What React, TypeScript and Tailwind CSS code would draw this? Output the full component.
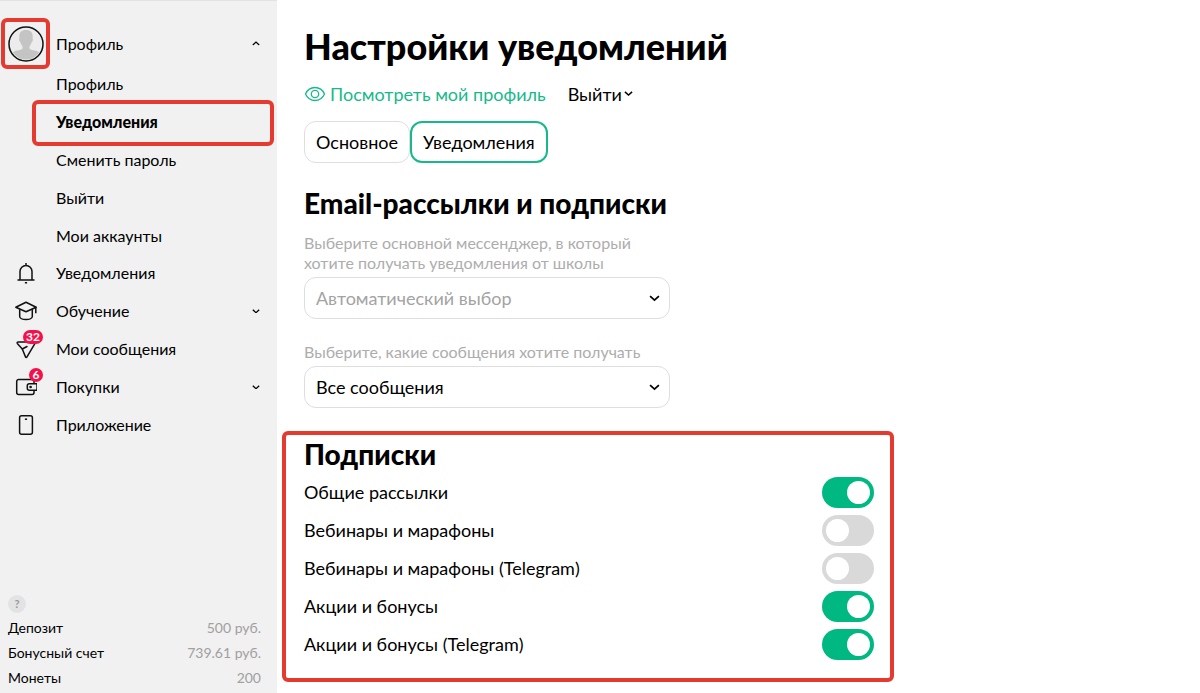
import { useState } from 'react';
import type { ReactNode } from 'react';

function ChevronDown({ className = '' }: { className?: string }) {
  return (
    <svg viewBox="0 0 10 6" fill="none" stroke="currentColor" strokeWidth="1.6" aria-hidden="true" className={className}>
      <path d="M1 1l4 3.6L9 1" />
    </svg>
  );
}

function AvatarIcon() {
  return (
    <svg viewBox="0 0 36 36" width="36" height="36" aria-hidden="true">
      <defs>
        <clipPath id="avatar">
          <circle cx="18" cy="18" r="15.5" />
        </clipPath>
      </defs>
      <circle cx="18" cy="18" r="17" fill="#ececec" stroke="#111" strokeWidth="1.5" />
      <g clipPath="url(#avatar)" fill="#c4c4c4">
        <path d="M18 4c-4.800 0-6.900 2.800-6.700 7 .1 1 .1 1.800-.2 2.600.2 1.800.8 2.600 1.400 3 .4 1.400 1.200 2.800 2 3.600v2.600c-1.200 1.700-9.500 1.700-10.500 4.700V36h28v-8.500c-1-3-9.300-3-10.500-4.700v-2.600c.8-.8 1.600-2.200 2-3.600.6-.4 1.200-1.200 1.400-3-.3-.8-.3-1.600-.2-2.600.2-4.200-1.900-7-6.700-7z" />
      </g>
    </svg>
  );
}

function BellIcon() {
  return (
    <svg viewBox="0 0 22 22" width="22" height="22" fill="none" stroke="#111" strokeWidth="1.5" aria-hidden="true">
      <path d="M2.500 18h17M5 18V9.500a6 6 0 0 1 12 0V18M11 3.500V1M9.900 20.800h2.200" />
    </svg>
  );
}

function CapIcon() {
  return (
    <svg viewBox="0 0 22 22" width="22" height="22" fill="none" stroke="#111" strokeWidth="1.5" strokeLinejoin="round" aria-hidden="true">
      <path d="M.8 7.200L11 2.300l10.200 4.900L11 11.800z" />
      <path d="M4.700 9.200v7.200c0 1.700 2.600 3.200 6.300 3.200s6.300-1.500 6.300-3.200V9.200M20.800 7.500v5.700" />
    </svg>
  );
}

function SendIcon() {
  return (
    <svg viewBox="0 0 22 22" width="22" height="22" fill="none" stroke="#111" strokeWidth="1.5" strokeLinejoin="round" strokeLinecap="round" aria-hidden="true">
      <path d="M3.200 4h15.900c.9 0 1.300.7.9 1.400L12 18.900c-.4.700-1.200.7-1.500 0L7.300 11 2.300 5.400C1.900 4.700 2.300 4 3.200 4z" />
      <path d="M7.300 11l4.700-2.500" />
    </svg>
  );
}

function WalletIcon() {
  return (
    <svg viewBox="0 0 22 22" width="22" height="22" fill="none" stroke="#111" strokeWidth="1.5" aria-hidden="true">
      <path d="M19 7.500V5.500a2 2 0 0 0-2-2H3.700a2 2 0 0 0-2 2v11a2 2 0 0 0 2 2H17a2 2 0 0 0 2-2V14.500" />
      <path d="M22 7.700h-7.700a2 2 0 0 0-2 2v2.600a2 2 0 0 0 2 2H22z" />
      <circle cx="15.600" cy="11" r=".6" fill="#111" />
    </svg>
  );
}

function PhoneIcon() {
  return (
    <svg viewBox="0 0 22 22" width="22" height="22" fill="none" stroke="#111" strokeWidth="1.5" aria-hidden="true">
      <rect x="4.600" y="1.700" width="12.800" height="18.600" rx="2" />
      <path d="M9.900 5.200h2.200" />
    </svg>
  );
}

function EyeIcon() {
  return (
    <svg viewBox="0 0 22 16" width="22" height="16" fill="none" stroke="currentColor" strokeWidth="1.300" aria-hidden="true">
      <path d="M1.500 8C3.300 4 7 1.500 11 1.500S18.700 4 20.500 8c-1.800 4-5.500 6.500-9.500 6.500S3.300 12 1.500 8z" />
      <circle cx="11" cy="8" r="3.700" />
    </svg>
  );
}

const profileItems = ['Профиль', 'Уведомления', 'Сменить пароль', 'Выйти', 'Мои аккаунты'];

const menuItems: { label: string; icon: ReactNode; badge?: string; expandable?: boolean }[] = [
  { label: 'Уведомления', icon: <BellIcon /> },
  { label: 'Обучение', icon: <CapIcon />, expandable: true },
  { label: 'Мои сообщения', icon: <SendIcon />, badge: '32' },
  { label: 'Покупки', icon: <WalletIcon />, badge: '6', expandable: true },
  { label: 'Приложение', icon: <PhoneIcon /> },
];

const balances = [
  { label: 'Депозит', value: '500 руб.' },
  { label: 'Бонусный счет', value: '739.61 руб.' },
  { label: 'Монеты', value: '200' },
];

function Sidebar() {
  return (
    <aside className="flex w-[277px] shrink-0 flex-col border-t border-[#e2e2e2] bg-[#f1f1f1]">
      <nav className="pt-[17px] text-base leading-5">
        <button type="button" className="relative flex h-[51px] w-full items-center pr-4 pl-2 text-left">
          <AvatarIcon />
          <span className="absolute top-0 left-px h-[51px] w-[49px] rounded-md border-4 border-[#e53a30]" />
          <span className="flex-1 pl-3">Профиль</span>
          <ChevronDown className="mr-px w-2 rotate-180" />
        </button>

        <ul className="-mt-1">
          {profileItems.map((item) => (
            <li key={item} className="relative">
              <a
                href="#"
                className={`flex h-[38px] items-center pl-14 ${item === 'Уведомления' ? 'font-black' : ''}`}
              >
                {item}
              </a>
              {item === 'Уведомления' && (
                <span className="pointer-events-none absolute -top-[3px] right-[3px] left-8 h-[46px] rounded-md border-4 border-[#e53a30]" />
              )}
            </li>
          ))}
        </ul>

        <ul className="-mt-px">
          {menuItems.map((item) => (
            <li key={item.label}>
              <a href="#" className="flex h-[38px] items-center pr-4 pl-[15px]">
                <span className="relative">
                  {item.icon}
                  {item.badge && (
                    <span className="absolute -top-2 -right-[6px] flex h-[14px] min-w-[14px] items-center justify-center rounded-full bg-[#f5104a] px-[3px] text-xs leading-none font-bold text-white">
                      {item.badge}
                    </span>
                  )}
                </span>
                <span className="flex-1 pl-[19px]">{item.label}</span>
                {item.expandable && <ChevronDown className="mr-px w-2" />}
              </a>
            </li>
          ))}
        </ul>
      </nav>

      <div className="mt-auto pr-4 pb-[3px] pl-2 text-sm">
        <button
          type="button"
          aria-label="Помощь"
          className="mb-[2px] flex size-[18px] items-center justify-center rounded-full bg-[#e3e3e3] text-[11px] font-bold text-[#999]"
        >
          ?
        </button>
        <dl>
          {balances.map((item) => (
            <div key={item.label} className="flex h-[25px] items-center justify-between">
              <dt>{item.label}</dt>
              <dd className="text-[#a0a0a0]">{item.value}</dd>
            </div>
          ))}
        </dl>
      </div>
    </aside>
  );
}

interface SelectFieldProps {
  id: string;
  label: string;
  value: string;
  muted?: boolean;
}

function SelectField({ id, label, value, muted }: SelectFieldProps) {
  return (
    <div className="max-w-[366px]">
      <label htmlFor={id} className="block pb-1 text-base leading-5 text-[#adadad]">
        {label}
      </label>
      <div className="relative">
        <select
          id={id}
          className={`h-[42px] w-full appearance-none rounded-xl border border-[#dedede] bg-white px-[11px] text-lg ${muted ? 'text-[#a3a3a3]' : 'text-black'}`}
        >
          <option>{value}</option>
        </select>
        <ChevronDown className="pointer-events-none absolute top-[18px] right-[10px] w-[11px]" />
      </div>
    </div>
  );
}

const initialSubscriptions = [
  { id: 'common', label: 'Общие рассылки', enabled: true },
  { id: 'webinars', label: 'Вебинары и марафоны', enabled: false },
  { id: 'webinars-tg', label: 'Вебинары и марафоны (Telegram)', enabled: false },
  { id: 'promo', label: 'Акции и бонусы', enabled: true },
  { id: 'promo-tg', label: 'Акции и бонусы (Telegram)', enabled: true },
];

function Subscriptions() {
  const [items, setItems] = useState(initialSubscriptions);

  const toggle = (id: string) => {
    setItems(items.map((item) => (item.id === id ? { ...item, enabled: !item.enabled } : item)));
  };

  return (
    <section className="mt-[23px] -ml-[22px] max-w-[612px] rounded-md border-4 border-[#e53a30] pr-4 pb-[15px] pl-[18px]">
      <h2 className="text-[28px] leading-[38px] font-black">Подписки</h2>
      {items.map((item) => (
        <label key={item.id} className="flex h-[38px] cursor-pointer items-center justify-between text-lg">
          {item.label}
          <input
            type="checkbox"
            checked={item.enabled}
            onChange={() => toggle(item.id)}
            className="h-[31px] w-[52px] cursor-pointer appearance-none rounded-full bg-[#d9d9d9] p-1 before:block before:size-[23px] before:rounded-full before:bg-white checked:bg-[#00b882] checked:before:ml-[21px]"
          />
        </label>
      ))}
    </section>
  );
}

export default function App() {
  return (
    <div className="flex min-h-screen bg-white font-[Lato,'Noto_Sans',sans-serif] text-black">
      <Sidebar />

      <main className="flex-1 pt-6 pr-6 pl-[27px]">
        <h1 className="text-[36px] leading-[44px] font-black">Настройки уведомлений</h1>

        <div className="mt-[13px] flex h-[26px] items-center text-lg">
          <a href="#" className="flex items-center gap-1 text-[#17b98a]">
            <EyeIcon />
            Посмотреть мой профиль
          </a>
          <button type="button" className="ml-[22px] flex items-center gap-[2px]">
            Выйти
            <ChevronDown className="w-[9px]" />
          </button>
        </div>

        {/* Tabs */}
        <div className="mt-[14px] flex text-lg">
          <button type="button" className="h-[42px] rounded-xl border border-[#dedede] px-[11px]">
            Основное
          </button>
          <button type="button" className="h-[42px] rounded-xl border-2 border-[#17b98a] px-[11px]">
            Уведомления
          </button>
        </div>

        <h2 className="mt-[22px] mb-3 text-[28px] leading-9 font-black">Email-рассылки и подписки</h2>
        <div className="flex flex-col gap-[23px]">
          <SelectField
            id="messenger"
            label="Выберите основной мессенджер, в который хотите получать уведомления от школы"
            value="Автоматический выбор"
            muted
          />
          <SelectField id="messages" label="Выберите, какие сообщения хотите получать" value="Все сообщения" />
        </div>

        <Subscriptions />
      </main>
    </div>
  );
}
